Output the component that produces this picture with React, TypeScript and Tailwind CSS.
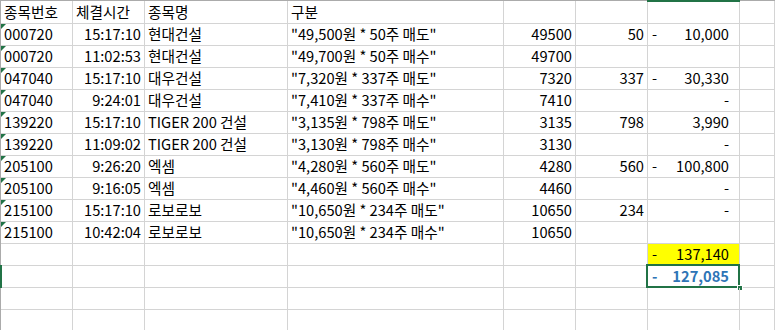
import React from 'react'

interface Row {
  code: string
  time: string
  name: string
  desc: string
  price: string
  qty: string
  sign?: boolean
  amount: string
}

const rows: Row[] = [
  { code: '000720', time: '15:17:10', name: '현대건설', desc: '"49,500원 * 50주 매도"', price: '49500', qty: '50', sign: true, amount: '10,000' },
  { code: '000720', time: '11:02:53', name: '현대건설', desc: '"49,700원 * 50주 매수"', price: '49700', qty: '', amount: '' },
  { code: '047040', time: '15:17:10', name: '대우건설', desc: '"7,320원 * 337주 매도"', price: '7320', qty: '337', sign: true, amount: '30,330' },
  { code: '047040', time: '9:24:01', name: '대우건설', desc: '"7,410원 * 337주 매수"', price: '7410', qty: '', amount: '-' },
  { code: '139220', time: '15:17:10', name: 'TIGER 200 건설', desc: '"3,135원 * 798주 매도"', price: '3135', qty: '798', amount: '3,990' },
  { code: '139220', time: '11:09:02', name: 'TIGER 200 건설', desc: '"3,130원 * 798주 매수"', price: '3130', qty: '', amount: '-' },
  { code: '205100', time: '9:26:20', name: '엑셈', desc: '"4,280원 * 560주 매도"', price: '4280', qty: '560', sign: true, amount: '100,800' },
  { code: '205100', time: '9:16:05', name: '엑셈', desc: '"4,460원 * 560주 매수"', price: '4460', qty: '', amount: '-' },
  { code: '215100', time: '15:17:10', name: '로보로보', desc: '"10,650원 * 234주 매도"', price: '10650', qty: '234', amount: '-' },
  { code: '215100', time: '10:42:04', name: '로보로보', desc: '"10,650원 * 234주 매수"', price: '10650', qty: '', amount: '' },
]

const cell = 'relative h-full shrink-0 border-r border-[#d4d4d4] flex items-center px-[3px] pb-[1px] whitespace-nowrap'

// green "number stored as text" marker
function Flag() {
  return (
    <span className="absolute left-0 top-0 w-0 h-0 border-t-[5px] border-r-[5px] border-t-[#217346] border-r-transparent" />
  )
}

function Amount({ sign, value }: { sign?: boolean; value: string }) {
  return (
    <div className="flex w-full items-center justify-between">
      <span className="pl-[1px]">{sign ? '-' : ''}</span>
      <span className="pr-[7px]">{value}</span>
    </div>
  )
}

function EmptyCells() {
  return (
    <>
      <div className={`${cell} w-[72px]`} />
      <div className={`${cell} w-[72px]`} />
      <div className={`${cell} w-[143px]`} />
      <div className={`${cell} w-[216px]`} />
      <div className={`${cell} w-[72px]`} />
      <div className={`${cell} w-[72px]`} />
    </>
  )
}

export default function App() {
  return (
    <div className="w-[775px] h-[330px] overflow-hidden bg-white text-[14.67px] text-black font-['Noto_Sans_CJK_KR','Noto_Sans',sans-serif]">
      <div className="relative border-t border-l border-[#ababab]">
        {/* header */}
        <div className="flex h-[23px] border-b border-[#d4d4d4]">
          <div className={`${cell} w-[72px]`}>종목번호</div>
          <div className={`${cell} w-[72px]`}>체결시간</div>
          <div className={`${cell} w-[143px]`}>종목명</div>
          <div className={`${cell} w-[216px]`}>구분</div>
          <div className={`${cell} w-[72px]`} />
          <div className={`${cell} w-[72px]`} />
          <div className={`${cell} w-[92px]`}>
            <span className="absolute -top-[1px] -left-[1px] -right-[1px] h-[2px] bg-[#217346]" />
          </div>
          <div className={`${cell} flex-1`} />
        </div>

        {rows.map((r, i) => (
          <div key={i} className="flex h-[22px] border-b border-[#d4d4d4]">
            <div className={`${cell} w-[72px]`}>
              <Flag />
              {r.code}
            </div>
            <div className={`${cell} w-[72px] justify-end`}>{r.time}</div>
            <div className={`${cell} w-[143px]`}>{r.name}</div>
            <div className={`${cell} w-[216px]`}>{r.desc}</div>
            <div className={`${cell} w-[72px] justify-end`}>{r.price}</div>
            <div className={`${cell} w-[72px] justify-end`}>{r.qty}</div>
            <div className={`${cell} w-[92px]`}>
              {r.amount && <Amount sign={r.sign} value={r.amount} />}
            </div>
            <div className={`${cell} flex-1`} />
          </div>
        ))}

        {/* totals */}
        <div className="flex h-[22px] border-b border-[#d4d4d4]">
          <EmptyCells />
          <div className={`${cell} w-[92px] bg-[#ffff00]`}>
            <Amount sign value="137,140" />
          </div>
          <div className={`${cell} flex-1`} />
        </div>
        <div className="relative flex h-[22px] border-b border-[#d4d4d4]">
          <span className="absolute -left-[1px] -top-[1px] h-[23px] w-[2px] bg-[#217346]" />
          <EmptyCells />
          <div className={`${cell} w-[92px] font-bold text-[#2e75b6]`}>
            <Amount sign value="127,085" />
            <span className="absolute -left-[2px] -top-[2px] -right-[1px] -bottom-[1px] border-2 border-[#217346]" />
            <span className="absolute -right-[4px] -bottom-[4px] h-[6px] w-[6px] border border-white bg-[#217346]" />
          </div>
          <div className={`${cell} flex-1`} />
        </div>
        {[0, 1].map((k) => (
          <div key={k} className="flex h-[22px] border-b border-[#d4d4d4]">
            <EmptyCells />
            <div className={`${cell} w-[92px]`} />
            <div className={`${cell} flex-1`} />
          </div>
        ))}
      </div>
    </div>
  )
}
